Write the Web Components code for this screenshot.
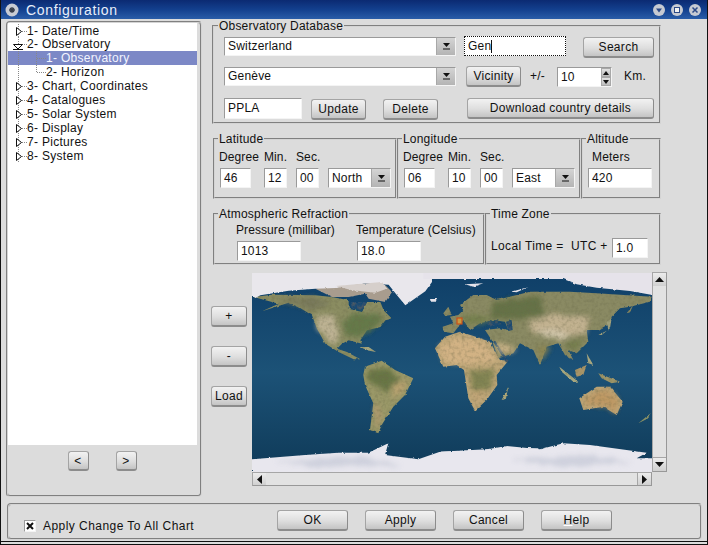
<!DOCTYPE html>
<html>
<head>
<meta charset="utf-8">
<title>Configuration</title>
<style>
  html, body { margin: 0; padding: 0; background: #dcdcdc; }
</style>
</head>
<body>
<config-dialog></config-dialog>
<script>
const UI_FONT = `"Liberation Sans", Arial, sans-serif`;

// small helper, every element is the same: template string into an open shadow root
class Base extends HTMLElement {
  constructor() {
    super();
    this.attachShadow({ mode: "open" });
  }
  connectedCallback() {
    this.shadowRoot.innerHTML = this.render();
  }
}

class UiButton extends Base {
  render() {
    return `<style>
      :host { display: inline-flex; box-sizing: border-box; height: 21px; flex: none;
        align-items: center; justify-content: center;
        border: 1px solid #a4a4a4; border-right-color: #8c8c8c; border-bottom: 2px solid #8c8c8c; border-radius: 3px;
        background: linear-gradient(#f2f2f2, #dedede 55%, #c4c4c4);
        font: 12px ${UI_FONT}; letter-spacing: .3px; color: #111; }
    </style><slot></slot>`;
  }
}
customElements.define("ui-button", UiButton);

class UiField extends Base {
  render() {
    return `<style>
      :host { display: inline-flex; box-sizing: border-box; height: 20px; flex: none; align-items: center;
        padding-left: 3px; background: #fff; white-space: nowrap;
        border: 1px solid; border-color: #9a9a9a #f4f4f4 #f4f4f4 #9a9a9a;
        font: 12px ${UI_FONT}; letter-spacing: .2px; color: #111; }
    </style><slot></slot>`;
  }
}
customElements.define("ui-field", UiField);

class UiCombo extends Base {
  render() {
    return `<style>
      :host { display: inline-flex; box-sizing: border-box; height: 20px; flex: none;
        background: #fff; border: 1px solid; border-color: #9a9a9a #f4f4f4 #f4f4f4 #9a9a9a;
        font: 12px ${UI_FONT}; letter-spacing: .2px; color: #111; }
      .txt { flex: 1; padding-left: 3px; display: flex; align-items: center; }
      .arr { width: 18px; display: flex; align-items: center; justify-content: center;
        background: linear-gradient(#d4d4d4, #b4b4b4); border-left: 1px solid #a8a8a8; }
    </style>
    <span class="txt"><slot></slot></span>
    <span class="arr"><svg width="9" height="7"><path d="M1 0h7L4.500 4z M1 5.500h7v1h-7z" fill="#111"/></svg></span>`;
  }
}
customElements.define("ui-combo", UiCombo);

class UiSpin extends Base {
  render() {
    return `<style>
      :host { display: inline-flex; box-sizing: border-box; height: 20px; flex: none;
        background: #fff; border: 1px solid; border-color: #9a9a9a #f4f4f4 #f4f4f4 #9a9a9a;
        font: 12px ${UI_FONT}; letter-spacing: .2px; color: #111; }
      .txt { flex: 1; padding-left: 3px; display: flex; align-items: center; }
      .arrs { width: 10px; display: grid; grid-template-rows: 1fr 1fr; }
      .arrs span { display: flex; align-items: center; justify-content: center;
        background: linear-gradient(#e2e2e2, #bcbcbc); border: 1px solid #a8a8a8; }
    </style>
    <span class="txt"><slot></slot></span>
    <span class="arrs">
      <span><svg width="6" height="4"><path d="M0 4h6L3 0z" fill="#111"/></svg></span>
      <span><svg width="6" height="4"><path d="M0 0h6L3 4z" fill="#111"/></svg></span>
    </span>`;
  }
}
customElements.define("ui-spin", UiSpin);

class UiGroup extends Base {
  render() {
    const label = this.getAttribute("label");
    return `<style>
      :host { display: block; box-sizing: border-box; font: 12px ${UI_FONT}; letter-spacing: .2px; color: #111; }
      fieldset { margin: 0; box-sizing: border-box; height: 100%; min-width: 0;
        padding: var(--pad, 0 0 0 5px); border: 2px groove #d4d4d4; }
      legend { padding: 0 1px; margin-left: var(--lg, -2px); line-height: 14px; }
    </style>
    <fieldset><legend>${label}</legend><slot></slot></fieldset>`;
  }
}
customElements.define("ui-group", UiGroup);

class TitleBar extends Base {
  render() {
    return `<style>
      :host { display: flex; align-items: center; height: 19px; box-sizing: border-box; padding: 0 6px 0 4px;
        background: linear-gradient(#0b2a72, #13408e 50%, #2a5da8);
        font: 14px ${UI_FONT}; letter-spacing: .65px; color: #e8eefa; }
      .name { flex: 1; margin-left: 7px; }
      .btns { display: flex; gap: 6px; }
      svg { display: block; }
    </style>
    <svg width="14" height="14" viewBox="0 0 14 14"><circle cx="7" cy="7" r="6.500" fill="#c8ccd4"/>
      <path d="M4 7h6M7 4v6M5 5l4 4M9 5l-4 4" stroke="#39404c" stroke-width="1.300"/></svg>
    <span class="name">Configuration</span>
    <span class="btns">
      <svg width="12" height="12" viewBox="0 0 12 12"><circle cx="6" cy="6" r="6" fill="#c6cad2"/><path d="M3 4.500h6L6 8.500z" fill="#2c4a88"/></svg>
      <svg width="12" height="12" viewBox="0 0 12 12"><circle cx="6" cy="6" r="6" fill="#c6cad2"/><rect x="3.500" y="3.500" width="5" height="5" fill="#f2f2f2" stroke="#2c4a88"/></svg>
      <svg width="12" height="12" viewBox="0 0 12 12"><circle cx="6" cy="6" r="6" fill="#c6cad2"/><path d="M3.500 3.500l5 5M8.500 3.500l-5 5" stroke="#2c4a88" stroke-width="1.500"/></svg>
    </span>`;
  }
}
customElements.define("title-bar", TitleBar);

class TreePanel extends Base {
  render() {
    const items = [
      ["1- Date/Time", "closed"], ["2- Observatory", "open"],
      ["1- Observatory", "child sel"], ["2- Horizon", "child last"],
      ["3- Chart, Coordinates", "closed"], ["4- Catalogues", "closed"], ["5- Solar System", "closed"],
      ["6- Display", "closed"], ["7- Pictures", "closed"], ["8- System", "closed last-top"]
    ];
    const dots = `stroke="#888" stroke-dasharray="1 1" fill="none"`;
    const rows = items.map(([txt, kind]) => {
      let g;
      if (kind.startsWith("child")) {
        const v2 = kind.includes("last") ? "M28.500 0V7" : "M28.500 0V14";
        g = `<svg width="38" height="14"><path d="M10.500 0V14 ${v2} M29 7.500H38" ${dots}/></svg>`;
      } else if (kind === "open") {
        g = `<svg width="19" height="14"><path d="M10.500 0V14 M14 7.500H19" ${dots}/><path d="M5.500 7.500h9l-4.500 4.500z M5 12.500h10" fill="#fff" stroke="#111"/></svg>`;
      } else {
        const v = kind === "last-top" ? "M10.500 0V7" : "M10.500 0V14";
        g = `<svg width="19" height="14"><path d="${v} M14 7.500H19" ${dots}/><path d="M8.500 3.500l5 4-5 4z" fill="#fff" stroke="#111"/></svg>`;
      }
      return `<div class="row ${kind}">${g}<span>${txt}</span></div>`;
    }).join("");
    return `<style>
      :host { display: flex; flex-direction: column; box-sizing: border-box; width: 196px; height: 476px; margin-top: 2px;
        padding: 0 3px 0 0; border: 2px groove #d4d4d4; border-radius: 4px;
        font: 12px ${UI_FONT}; letter-spacing: .3px; color: #111; }
      .tree { height: 422px; background: #fff; padding-top: 1px; box-sizing: border-box; }
      .row { display: flex; height: 14px; line-height: 14px; }
      .row:first-child { height: 13px; }
      svg { flex: none; }
      .sel { background: #7c88c6; color: #f2f4ff; }
      .nav { display: flex; justify-content: center; gap: 27px; padding-top: 6px; padding-right: 1px; }
      ui-button { width: 21px; height: 20px; }
    </style>
    <div class="tree">${rows}</div>
    <div class="nav"><ui-button>&lt;</ui-button><ui-button>&gt;</ui-button></div>`;
  }
}
customElements.define("tree-panel", TreePanel);

class ObservatoryGroup extends Base {
  render() {
    return `<style>
      :host { display: block; width: 449px; font: 12px ${UI_FONT}; letter-spacing: .2px; color: #111; }
      ui-group { height: 105px; --pad: 0 0 0 10px; --lg: -6px; }
      .rows { display: flex; flex-direction: column; gap: 10px; padding-top: 3px; }
      .row { display: flex; align-items: center; height: 20px; white-space: nowrap; }
      .row:last-child { margin-top: 2px; }
      ui-combo { height: 19px; }
      .focus { border: 1px dotted #111; background: #fff; }
      .caret { display: inline-block; width: 1px; height: 13px; background: #111; }
    </style>
    <ui-group label="Observatory Database">
      <div class="rows">
        <div class="row">
          <ui-combo style="width:232px">Switzerland</ui-combo>
          <ui-field class="focus" style="width:102px;margin-left:8px">Gen<span class="caret"></span></ui-field>
          <ui-button style="width:71px;margin:2px 0 0 17px">Search</ui-button>
        </div>
        <div class="row">
          <ui-combo style="width:232px">Genève</ui-combo>
          <ui-button style="width:55px;margin-left:10px">Vicinity</ui-button>
          <span style="margin-left:9px;width:27px">+/-</span>
          <ui-spin style="width:55px;margin-top:2px">10</ui-spin>
          <span style="margin-left:12px">Km.</span>
        </div>
        <div class="row">
          <ui-field style="width:78px;height:21px">PPLA</ui-field>
          <ui-button style="width:55px;margin:2px 0 0 9px">Update</ui-button>
          <ui-button style="width:55px;margin:2px 0 0 17px">Delete</ui-button>
          <ui-button style="width:187px;margin-left:29px">Download country details</ui-button>
        </div>
      </div>
    </ui-group>`;
  }
}
customElements.define("observatory-group", ObservatoryGroup);

class AngleGroup extends Base {
  render() {
    const a = this.getAttribute.bind(this);
    return `<style>
      :host { display: block; }
      ui-group { height: 100%; }
      .grid { display: grid; grid-template-columns: 44px 32px 32px 63px; row-gap: 4px; grid-template-rows: 14px 20px; padding-top: 4px; }
      .grid span { white-space: nowrap; line-height: 14px; letter-spacing: .1px; }
      .grid span:first-child { margin-left: -1px; }
      .deg { width: 31px; }
      .sm { width: 23px; }
    </style>
    <ui-group label="${a("label")}">
      <div class="grid">
        <span>Degree</span><span>Min.</span><span>Sec.</span><span></span>
        <div><ui-field class="deg">${a("deg")}</ui-field></div><div><ui-field class="sm">${a("min")}</ui-field></div><div><ui-field class="sm">${a("sec")}</ui-field></div><ui-combo>${a("dir")}</ui-combo>
      </div>
    </ui-group>`;
  }
}
customElements.define("angle-group", AngleGroup);

class CoordsRow extends Base {
  render() {
    return `<style>
      :host { display: grid; grid-template-columns: 184px 184px 80px; height: 67px; margin: 8px 0 0 1px; }
      .alt { display: grid; grid-template-rows: 14px 20px; row-gap: 4px; padding-top: 4px; }
      .alt span { margin-left: 4px; line-height: 14px; }
    </style>
    <angle-group label="Latitude" deg="46" min="12" sec="00" dir="North"></angle-group>
    <angle-group label="Longitude" deg="06" min="10" sec="00" dir="East"></angle-group>
    <ui-group label="Altitude">
      <div class="alt"><span>Meters</span><ui-field style="width:64px">420</ui-field></div>
    </ui-group>`;
  }
}
customElements.define("coords-row", CoordsRow);

class AtmosRow extends Base {
  render() {
    return `<style>
      :host { display: grid; grid-template-columns: 272px 176px; height: 58px; margin: 8px 0 0 1px; }
      .atm { display: grid; grid-template-columns: 64px 64px; column-gap: 56px; grid-template-rows: 14px 21px; row-gap: 4px;
        padding: 2px 0 0 17px; white-space: nowrap; }
      .atm span { line-height: 14px; margin-left: -1px; letter-spacing: .08px; }
      .tz { display: flex; align-items: center; justify-content: space-between; height: 20px; padding: 17px 11px 0 0; margin-left: -1px; white-space: nowrap; }
      .tz span { margin-top: -4px; letter-spacing: .35px; }
    </style>
    <ui-group label="Atmospheric Refraction">
      <div class="atm">
        <span>Pressure (millibar)</span><span>Temperature (Celsius)</span>
        <ui-field>1013</ui-field><ui-field>18.0</ui-field>
      </div>
    </ui-group>
    <ui-group label="Time Zone">
      <div class="tz"><span>Local Time =&nbsp; UTC +</span><ui-field style="width:36px">1.0</ui-field></div>
    </ui-group>`;
  }
}
customElements.define("atmos-row", AtmosRow);

// the earth picture: hand drawn continents, coordinates are traced in 3x crops
// A = translate(178 2), B = translate(0 -1), C = translate(-47 -3), D = translate(188 -3)
class EarthMap extends Base {
  render() {
    const A = `transform="translate(178 2) scale(.3333)"`;
    const B = `transform="translate(0 -1) scale(.3333)"`;
    const C = `transform="translate(-47 -3) scale(.3333)"`;
    const D = `transform="translate(188 -3) scale(.3333)"`;
    return `<style>
      :host { display: block; width: 400px; height: 199px; overflow: hidden; }
      svg { display: block; }
    </style>
    <svg width="400" height="199" viewBox="0 0 400 199">
      <defs>
        <linearGradient id="sea" x1="0" y1="0" x2="0" y2="1">
          <stop offset="0" stop-color="#0f3f68"/><stop offset=".5" stop-color="#1c5277"/><stop offset="1" stop-color="#0f3a58"/>
        </linearGradient>
        <filter id="rough" filterUnits="userSpaceOnUse" x="-5" y="-5" width="410" height="210">
          <feTurbulence type="fractalNoise" baseFrequency=".25" numOctaves="2" seed="7" result="n"/>
          <feDisplacementMap in="SourceGraphic" in2="n" scale="2.500" xChannelSelector="R" yChannelSelector="G"/>
          <feGaussianBlur stdDeviation=".6"/>
        </filter>
        <filter id="soft" filterUnits="userSpaceOnUse" x="-5" y="-5" width="410" height="210">
          <feTurbulence type="fractalNoise" baseFrequency=".1" numOctaves="3" seed="3" result="n"/>
          <feDisplacementMap in="SourceGraphic" in2="n" scale="8" xChannelSelector="R" yChannelSelector="G"/>
          <feGaussianBlur stdDeviation="2.600"/>
        </filter>
        <filter id="mottle" filterUnits="userSpaceOnUse" x="-5" y="-5" width="410" height="210">
          <feTurbulence type="fractalNoise" baseFrequency=".3" numOctaves="2" seed="11" result="m"/>
          <feColorMatrix in="m" type="matrix" values="0 0 0 0 .15  0 0 0 0 .15  0 0 0 0 .07  0 0 0 1 -.42" result="dark"/>
          <feGaussianBlur in="dark" stdDeviation=".5" result="darkb"/>
          <feComposite in="darkb" in2="SourceAlpha" operator="in" result="dm"/>
          <feMerge><feMergeNode in="SourceGraphic"/><feMergeNode in="dm"/></feMerge>
        </filter>
      </defs>
      <rect width="400" height="199" fill="url(#sea)"/>

      <g filter="url(#mottle)">
        <g filter="url(#rough)">
          <g ${B} fill="#8b8d62">
            <path d="M5 75L60 68 190 70 240 75 290 85 290 110 330 120 345 90 385 90 395 115 420 140 400 145 385 165 345 175 325 205 330 215 290 205 270 215 255 230 285 240 325 262 305 262 260 240 220 215 195 170 180 130 140 105 110 92 70 105 30 118 80 95 60 90Z"/>
            <path d="M325 225L350 225 372 240 345 235Z" fill="#a8a880"/>
          </g>
          <g ${C} fill="#9a9868">
            <path d="M480 290L530 272 570 300 625 325 600 375 565 410 530 465 520 490 495 480 505 400 480 345 475 315Z"/>
          </g>
          <g ${D} fill="#bda678">
            <path d="M-15 235L15 200 60 185 100 198 150 215 180 270 205 272 170 315 172 345 140 390 105 422 85 385 72 300 50 285 10 290Z"/>
            <path d="M185 390L205 350 198 385Z" fill="#b0a878"/>
            <path d="M418 385L470 350 510 350 548 395 530 435 490 410 430 420Z"/>
            <path d="M595 460L632 430 625 445Z" fill="#8c9468"/>
          </g>
          <g ${A} fill="#8a8a64">
            <path d="M38 155L70 145 60 125 85 120 100 105 90 90 130 60 170 60 200 75 300 50 420 50 500 55 665 65 660 80 600 95 570 100 545 125 540 145 505 165 470 165 475 200 440 235 415 225 430 255 405 240 385 205 350 215 330 270 310 225 270 205 250 235 205 250 185 195 165 165 210 160 235 165 225 140 190 135 150 145 120 165 100 135 85 155 70 175 40 170Z"/>
            <path d="M40 115L55 95 65 120 45 122Z"/>
            <path d="M505 180L535 165 530 140 545 130 540 160 515 180Z" fill="#a0a07c"/>
            <path d="M590 115L610 90 600 112Z"/>
            <path d="M388 275L445 320 430 320 395 290Z" fill="#a8a880"/>
            <path d="M435 285L470 270 460 300 440 305Z" fill="#a89468"/>
            <path d="M470 235L490 270 475 265Z" fill="#a8a880"/>
            <path d="M505 295L570 320 545 325 515 310Z" fill="#9c9468"/>
          </g>
          <!-- inland seas -->
          <g ${B} fill="#1a4c72">
            <path d="M296 90L345 90 330 118 295 108Z"/>
          </g>
          <g ${A} fill="#1a4c72">
            <path d="M228 140L245 135 248 165 235 168Z"/>
            <path d="M165 142L200 135 215 148 180 155Z"/>
            <path d="M188 198L196 198 238 262 228 262Z"/>
          </g>
        </g>

        <g filter="url(#soft)" opacity=".8">
          <g ${B}>
            <path d="M300 125L400 130 370 170 320 195 280 190 270 150Z" fill="#5c7444"/>
            <path d="M195 130L245 135 265 190 250 220 225 205 200 165Z" fill="#cabca0"/>
            <path d="M70 78L190 78 240 95 180 118 120 95Z" fill="#74745a"/>
          </g>
          <g ${C}>
            <path d="M495 295L555 295 585 330 545 365 505 345 488 320Z" fill="#5c6d3c"/>
            <path d="M572 340L608 332 590 372 558 392Z" fill="#c0a472"/>
            <path d="M512 400L528 405 520 468 508 468Z" fill="#b89a72"/>
          </g>
          <g ${A}>
            <path d="M25 215L75 185 170 205 195 260 110 265 40 262Z" fill="#d8b688"/>
            <path d="M115 285L190 280 185 335 135 350 120 320Z" fill="#727c48"/>
            <path d="M190 80L330 62 345 120 260 132 180 128Z" fill="#5c6c40"/>
            <path d="M85 125L180 122 165 145 110 148Z" fill="#707e48"/>
            <path d="M300 140L360 118 480 130 470 178 380 192 305 172Z" fill="#d0bc9c"/>
            <path d="M315 165L380 162 420 185 350 192Z" fill="#e2d4bc"/>
            <path d="M195 198L240 210 255 228 212 240Z" fill="#d8bc90"/>
            <path d="M318 218L365 212 332 262Z" fill="#8c8450"/>
            <path d="M402 205L462 190 440 230Z" fill="#6f7a48"/>
          </g>
          <g ${D}>
            <path d="M92 365L135 365 108 410Z" fill="#c5a678"/>
            <path d="M440 380L480 358 505 358 538 398 520 425 480 405 436 410Z" fill="#bd9560"/>
          </g>
        </g>
      </g>

      <!-- ice -->
      <g filter="url(#rough)">
        <g ${B}>
          <path d="M190 50L270 30 400 40 420 60 400 90 350 80 340 65 290 75 240 75Z" fill="#a89c8e"/>
          <path d="M0 0L540 0 540 30 520 58 460 100 435 70 410 38 340 34 250 48 190 50 110 56 25 70 10 78 0 70Z" fill="#e9e7ec"/>
          <path d="M250 42L390 30 405 50 370 62 300 55Z" fill="#d6cfcb"/>
        </g>
        <g ${A} fill="#e6e3ea">
          <path d="M-20 -10L680 -10 680 62 600 48 500 38 440 28 400 12 -20 12Z"/>
          <path d="M0 72L22 72 16 80 2 80Z"/>
          <path d="M105 28L160 25 130 35Z"/>
          <path d="M245 50L295 36 260 52Z"/>
        </g>
        <g ${C} fill="#e8e7ee">
          <path d="M141 568L300 555 400 548 490 548 550 520 540 555 640 568 705 545 900 535 1000 535 1000 620 141 620Z"/>
        </g>
        <g ${D} fill="#e8e7ee">
          <path d="M0 545L130 540 200 528 300 538 370 520 450 525 620 548 590 565 640 565 640 620 0 620Z"/>
        </g>
      </g>
      <!-- grey streaks in the south ice -->
      <g filter="url(#soft)" fill="#c4c8d6" opacity=".7">
        <path d="M20 188L110 184 150 192 60 194Z"/>
        <path d="M260 186L340 182 380 190 300 193Z"/>
      </g>

      <!-- marker on Geneve -->
      <rect x="205" y="45" width="5" height="6" fill="#c89a40" stroke="#c8501c" stroke-width="1.200"/>
    </svg>`;
  }
}
customElements.define("earth-map", EarthMap);

class ScrollBar extends Base {
  render() {
    const horiz = this.hasAttribute("horizontal");
    const [a, b] = horiz
      ? ["M6 0v9L1 4.500z", "M1 0v9l5-4.500z"]
      : ["M0 6h9L4.500 1z", "M0 1h9L4.500 6z"];
    const svg = d => `<span class="end"><svg width="${horiz ? 7 : 9}" height="${horiz ? 9 : 7}"><path d="${d}" fill="#111"/></svg></span>`;
    return `<style>
      :host { display: flex; flex-direction: ${horiz ? "row" : "column"}; box-sizing: border-box;
        ${horiz ? "height: 14px;" : "width: 15px;"}
        background: #e2e2e2; border: 1px solid #a6a6a6; border-right-color: #989898; border-bottom: 1px solid #989898; }
      .end { ${horiz ? "width: 13px;" : "height: 13px;"} flex: none; display: flex; align-items: center; justify-content: center;
        background: linear-gradient(#ececec, #d0d0d0); }
      .end:first-child { ${horiz ? "border-right" : "border-bottom"}: 1px solid #a6a6a6; }
      .end:last-child { ${horiz ? "border-left" : "border-top"}: 1px solid #a6a6a6; }
      .mid { flex: 1; }
    </style>${svg(a)}<span class="mid"></span>${svg(b)}`;
  }
}
customElements.define("scroll-bar", ScrollBar);

class MapPanel extends Base {
  render() {
    return `<style>
      :host { display: flex; margin-top: 7px; }
      .tools { display: flex; flex-direction: column; gap: 19px; width: 36px; margin: 34px 5px 0 -1px; }
      .tools ui-button { width: 36px; }
      .view { display: grid; grid-template-columns: 400px 15px; grid-template-rows: 200px 14px; flex: none; }
      earth-map { margin-top: 1px; }
      scroll-bar[horizontal] { grid-column: 1; }
    </style>
    <div class="tools"><ui-button>+</ui-button><ui-button>-</ui-button><ui-button>Load</ui-button></div>
    <div class="view"><earth-map></earth-map><scroll-bar></scroll-bar><scroll-bar horizontal></scroll-bar></div>`;
  }
}
customElements.define("map-panel", MapPanel);

class DialogFooter extends Base {
  render() {
    return `<style>
      :host { display: flex; align-items: flex-start; box-sizing: border-box; height: 37px; margin: 3px 5px 0 6px;
        border: 2px groove #d4d4d4; border-radius: 4px;
        font: 12px ${UI_FONT}; letter-spacing: .45px; color: #111; }
      .chk { display: flex; align-items: center; width: 268px; padding: 14px 0 0 15px; box-sizing: border-box; white-space: nowrap; }
      .box { box-sizing: border-box; width: 12px; height: 12px; background: #fff; margin-right: 7px; display: flex;
        border: 1px solid; border-color: #9a9a9a #f4f4f4 #f4f4f4 #9a9a9a; }
      .btns { display: flex; gap: 17px; padding-top: 5px; }
      ui-button { width: 71px; }
      u { text-decoration-color: #fff; }
    </style>
    <div class="chk"><span class="box"><svg width="10" height="10"><path d="M2 2l6 6M8 2l-6 6" stroke="#111" stroke-width="2"/></svg></span>Apply Change To All Chart</div>
    <div class="btns"><ui-button>OK</ui-button><ui-button>Apply</ui-button><ui-button>Cancel</ui-button><ui-button><u>H</u>elp</ui-button></div>`;
  }
}
customElements.define("dialog-footer", DialogFooter);

class ConfigDialog extends Base {
  render() {
    return `<style>
      :host { display: block; box-sizing: border-box; width: 708px; height: 545px; overflow: hidden; background: #dcdcdc;
        border: solid #111; border-width: 0 1px 1px 1px; }
      .main { display: flex; height: 481px; padding-left: 5px; }
      .right { width: 456px; margin-left: 10px; }
      .bottom-edge { height: 3px; margin-top: 1px; border-top: 1px solid #111; box-sizing: border-box; }
    </style>
    <title-bar></title-bar>
    <div class="main">
      <tree-panel></tree-panel>
      <div class="right">
        <observatory-group></observatory-group>
        <coords-row></coords-row>
        <atmos-row></atmos-row>
        <map-panel></map-panel>
      </div>
    </div>
    <dialog-footer></dialog-footer>
    <div class="bottom-edge"></div>`;
  }
}
customElements.define("config-dialog", ConfigDialog);
</script>
</body>
</html>
